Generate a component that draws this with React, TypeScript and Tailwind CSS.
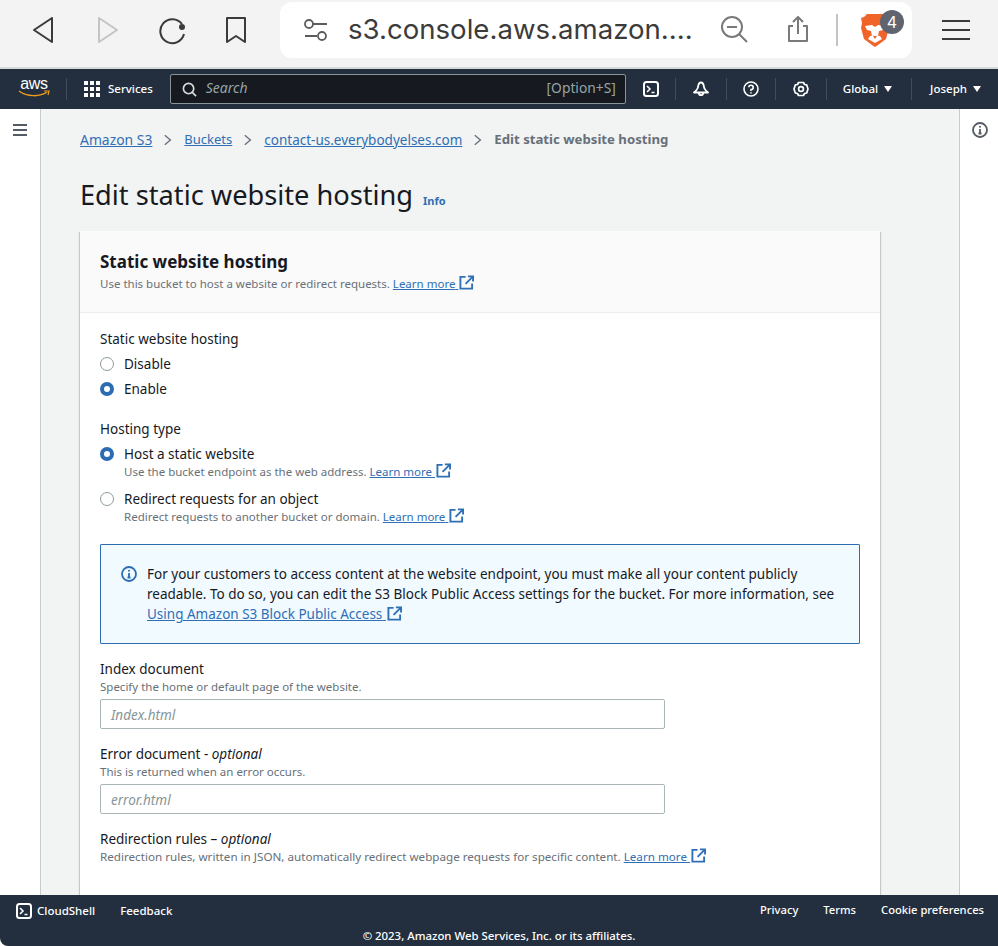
import React from "react";

const font = "font-['Noto_Sans',sans-serif]";

function ExternalIcon({ className = "" }: { className?: string }) {
    return (
        <svg viewBox="0 0 16 16" fill="none" stroke="#2f6fb5" strokeWidth="2" className={`inline-block w-[15px] h-[15px] ${className}`}>
            <path d="M7 2H1.500v12.500H14V9" />
            <path d="M9.500 1.500H15V7M15 1.500 7 9.500" />
        </svg>
    );
}

function LearnMore({ text = "Learn more" }: { text?: string }) {
    return (
        <span className="text-[#2f6fb5] whitespace-nowrap">
            <span className="underline">{text}&nbsp;</span>
            <ExternalIcon className="ml-[1px] align-[-2px]" />
        </span>
    );
}

function Radio({ checked, label }: { checked?: boolean; label: string }) {
    return (
        <div className="flex items-center h-5">
            {checked ? (
                <span className="w-[14px] h-[14px] rounded-full border-[4px] border-[#2b6cb3] bg-white" />
            ) : (
                <span className="w-[14px] h-[14px] rounded-full border border-[#8d9a9e] bg-white" />
            )}
            <span className="ml-[10px] text-[13.5px] text-[#16191f]">{label}</span>
        </div>
    );
}

function Desc({ children, className = "text-[11.5px]" }: { children: React.ReactNode; className?: string }) {
    return <p className={`leading-[18px] text-[#687078] whitespace-nowrap ${className}`}>{children}</p>;
}

function Divider() {
    return <span className="w-px h-[22px] bg-[#414d5c]" />;
}

function Chevron() {
    return (
        <svg viewBox="0 0 10 14" fill="none" stroke="#687078" strokeWidth="1.700" className="mx-3 w-2 h-3">
            <path d="M1 1l7 6-7 6" />
        </svg>
    );
}

function BrowserBar() {
    return (
        <div className="h-[67px] bg-[#f3f3f3] flex items-start shrink-0">
            <div className="flex items-center h-[60px] w-[280px]">
                <svg viewBox="0 0 24 30" fill="none" stroke="#3a3a3c" strokeWidth="2" strokeLinejoin="round" className="ml-[31px] w-6 h-[30px]">
                    <path d="M21 3 3 15l18 12z" />
                </svg>
                <svg viewBox="0 0 24 30" fill="none" stroke="#c4c4c4" strokeWidth="2" strokeLinejoin="round" className="ml-[40px] w-6 h-[30px]">
                    <path d="M4 3 22 15 4 27z" />
                </svg>
                <svg viewBox="0 0 30 30" fill="none" stroke="#3a3a3c" strokeWidth="2" className="ml-[39px] w-[30px] h-[30px]">
                    <path d="M24 9A12 12 0 1 0 26 19" />
                    <circle cx="24" cy="12" r="3" fill="#3a3a3c" stroke="none" />
                </svg>
                <svg viewBox="0 0 22 28" fill="none" stroke="#3a3a3c" strokeWidth="2" strokeLinejoin="round" className="ml-[37px] w-[22px] h-[28px]">
                    <path d="M2 2h18v24l-9-6-9 6z" />
                </svg>
            </div>
            <div className="mt-[2px] w-[632px] h-[56px] bg-white rounded-[12px] flex items-center">
                <svg viewBox="0 0 26 26" fill="none" stroke="#5c5c5c" strokeWidth="1.800" className="ml-[23px] w-[26px] h-[26px]">
                    <circle cx="6" cy="7" r="4" />
                    <path d="M10 7h14M2 19h12" />
                    <circle cx="19" cy="19" r="4" />
                </svg>
                <span className="ml-[19px] text-[27.6px] text-[#3b3b3b] font-['Inter',sans-serif] whitespace-nowrap w-[360px]">s3.console.aws.amazon....</span>
                <svg viewBox="0 0 30 30" fill="none" stroke="#7a7a7a" strokeWidth="2" className="ml-[11px] w-[30px] h-[30px]">
                    <circle cx="13" cy="12" r="10" />
                    <path d="M8 12h10M20 19l8 8" />
                </svg>
                <svg viewBox="0 0 24 30" fill="none" stroke="#7a7a7a" strokeWidth="2" strokeLinejoin="round" className="ml-[37px] w-6 h-[30px]">
                    <path d="M7 11H3v15h18V11h-4M12 19V2M7 7l5-5 5 5" />
                </svg>
                <span className="ml-[26px] w-[2px] h-[32px] bg-[#c4c4c4]" />
                <div className="relative ml-[22px] w-[30px] h-[36px]">
                    <svg viewBox="0 0 30 36" className="w-[30px] h-[36px]">
                        <path d="M7 2h16l3 3 3 1-1 5 1 5-3 11-8 6-3 2-3-2-8-6-3-11 1-5-1-5 3-1z" fill="#f0642a" />
                        <path d="M5 14l7-1 3 2 3-2 7 1-2 4-4 1-1 5-3-1-3 1-1-5-4-1z" fill="#fff" />
                        <path d="M10 24l5-1 5 1 2 3-7 4-7-4z" fill="#fff" />
                        <path d="M13 24h4l-2 3z" fill="#f0642a" />
                    </svg>
                    <span className="absolute left-[20px] top-[-2px] w-6 h-6 rounded-full bg-[#5f6470] text-white text-[16px] leading-6 text-center font-['Inter',sans-serif]">4</span>
                </div>
            </div>
            <div className="ml-[30px] mt-[20px] w-[28px] flex flex-col gap-[7px]">
                <span className="h-[2px] bg-[#3a3a3c]" />
                <span className="h-[2px] bg-[#3a3a3c]" />
                <span className="h-[2px] bg-[#3a3a3c]" />
            </div>
        </div>
    );
}

function AwsNav() {
    return (
        <div className="h-[42px] bg-[#232f3e] border-t-2 border-[#d5dbdb] flex items-center shrink-0 text-white text-[11.5px] font-medium">
            <div className="ml-[18px] w-[32px] h-[24px] flex flex-col items-center relative">
                <span className="text-[16px] leading-[14px] font-normal font-['Liberation_Sans',sans-serif] tracking-[-0.3px]">aws</span>
                <svg viewBox="0 0 32 8" fill="none" className="absolute left-0 top-[13px] w-8 h-2">
                    <path d="M1 1c8 6 21 6 28 1" stroke="#ec9a1c" strokeWidth="1.500" />
                    <path d="M26 1h5l-1 4" stroke="#ec9a1c" strokeWidth="1.200" />
                </svg>
            </div>
            <span className="ml-[16px] flex"><Divider /></span>
            <div className="ml-[17px] grid grid-cols-3 gap-[2px] w-[16px]">
                {Array.from({ length: 9 }).map((_, i) => (
                    <span key={i} className="w-[4px] h-[4px] bg-white" />
                ))}
            </div>
            <span className="ml-[8px]">Services</span>
            <div className="ml-[17px] w-[456px] h-[30px] bg-[#16191f] border border-[#879596] rounded-[2px] flex items-center">
                <svg viewBox="0 0 16 16" fill="none" stroke="#d5dbdb" strokeWidth="1.800" className="ml-[11px] w-[15px] h-[15px]">
                    <circle cx="7" cy="7" r="5.500" />
                    <path d="M11 11l4 4" />
                </svg>
                <span className="ml-[9px] italic text-[#95a5a6] text-[14px] font-normal leading-[20px] -translate-y-px">Search</span>
                <span className="ml-auto mr-[9px] text-[#95a5a6] text-[13.8px] font-normal leading-[20px] -translate-y-px">[Option+S]</span>
            </div>
            <svg viewBox="0 0 16 16" fill="none" stroke="#fff" strokeWidth="2" className="ml-[17px] w-4 h-4">
                <rect x="1" y="1" width="14" height="14" rx="2.500" />
                <path d="M4 5l3 3-3 3M8.500 11.500h3" strokeWidth="1.600" />
            </svg>
            <span className="ml-[16px] flex"><Divider /></span>
            <svg viewBox="0 0 16 16" fill="none" stroke="#fff" strokeWidth="1.800" strokeLinejoin="round" className="ml-[17px] w-4 h-4">
                <path d="M8 1.500C5.800 1.500 5.300 3.500 5 6 4.800 8 3 9.800 1 11.500h14C13 9.800 11.200 8 11 6 10.700 3.500 10.200 1.500 8 1.500z" />
                <path d="M5.800 12a2.200 2.200 0 0 0 4.400 0" />
            </svg>
            <span className="ml-[17px] flex"><Divider /></span>
            <svg viewBox="0 0 16 16" fill="none" stroke="#fff" strokeWidth="1.600" className="ml-[16px] w-4 h-4">
                <circle cx="8" cy="8" r="7" />
                <path d="M5.800 6.200A2.200 2.200 0 1 1 8 8.600v1.400M8 11.200v1.400" />
            </svg>
            <span className="ml-[16px] flex"><Divider /></span>
            <svg viewBox="0 0 16 16" fill="none" stroke="#fff" strokeWidth="1.700" strokeLinejoin="round" className="ml-[17px] w-4 h-4">
                <path d="M5.500 1.500h5l1 2 2.200.4L15 8l-1.300 4-2.200.5-1 2h-5l-1-2-2.200-.5L1 8l1.300-4.100 2.200-.4z" />
                <circle cx="8" cy="8" r="2.400" />
            </svg>
            <span className="ml-[17px] flex"><Divider /></span>
            <span className="ml-[16px]">Global</span>
            <span className="ml-[6px] w-0 h-0 border-l-[4px] border-r-[4px] border-t-[6px] border-l-transparent border-r-transparent border-t-white" />
            <span className="ml-[19px] flex"><Divider /></span>
            <span className="ml-[18px]">Joseph</span>
            <span className="ml-[6px] w-0 h-0 border-l-[4px] border-r-[4px] border-t-[6px] border-l-transparent border-r-transparent border-t-white" />
        </div>
    );
}

function Footer() {
    return (
        <div className="h-[51px] bg-[#232f3e] rounded-bl-[8px] shrink-0 text-white text-[11.2px] font-medium relative">
            <div className="flex items-center h-[31px]">
                <svg viewBox="0 0 16 16" fill="none" stroke="#fff" strokeWidth="2" className="ml-[16px] w-4 h-4">
                    <rect x="1" y="1" width="14" height="14" rx="2.500" />
                    <path d="M4 5l3 3-3 3M8.500 11.500h3" strokeWidth="1.600" />
                </svg>
                <span className="ml-[5px] text-[11.5px]">CloudShell</span>
                <span className="ml-[25px] text-[11.5px]">Feedback</span>
                <span className="ml-auto">Privacy</span>
                <span className="ml-[25px]">Terms</span>
                <span className="ml-[25px] mr-[14px]">Cookie preferences</span>
            </div>
            <p className="text-center text-[11.4px] leading-[20px]">© 2023, Amazon Web Services, Inc. or its affiliates.</p>
        </div>
    );
}

function Card() {
    return (
        <div className="mt-[18px] w-[800px] bg-white shadow-[0_1px_1px_0_rgba(0,28,36,0.3),1px_1px_1px_0_rgba(0,28,36,0.15),-1px_1px_1px_0_rgba(0,28,36,0.15)] grow">
            <div className="h-[82px] bg-[#fafafa] border-b border-[#eaeded] px-5 pt-[18px]">
                <h2 className="text-[17px] leading-[26px] font-bold text-[#16191f]">Static website hosting</h2>
                <Desc>
                    Use this bucket to host a website or redirect requests. <LearnMore />
                </Desc>
            </div>
            <div className="px-5 pt-4 text-[13.5px] leading-5 text-[#16191f]">
                <p>Static website hosting</p>
                <div className="mt-[5px] flex flex-col gap-[5px]">
                    <Radio label="Disable" />
                    <Radio checked label="Enable" />
                </div>

                <p className="mt-5">Hosting type</p>
                <div className="mt-[5px]">
                    <Radio checked label="Host a static website" />
                    <Desc className="text-[11.5px] ml-6 -mt-px">
                        Use the bucket endpoint as the web address. <LearnMore />
                    </Desc>
                </div>
                <div className="mt-2">
                    <Radio label="Redirect requests for an object" />
                    <Desc className="text-[11.5px] ml-6 -mt-px">
                        Redirect requests to another bucket or domain. <LearnMore />
                    </Desc>
                </div>

                <div className="mt-[18px] h-[100px] bg-[#f1faff] border border-[#2b6cb3] rounded-[1px] flex pl-[20px] pt-[19px]">
                    <svg viewBox="0 0 16 16" fill="none" stroke="#2b6cb3" strokeWidth="1.800" className="mt-[2px] w-4 h-4 shrink-0">
                        <circle cx="8" cy="8" r="7" />
                        <path d="M8 7v4.500M6.500 11.500h3" />
                        <circle cx="8" cy="4.700" r="1" fill="#2b6cb3" stroke="none" />
                    </svg>
                    <div className="ml-[10px] w-[700px]">
                        <p>For your customers to access content at the website endpoint, you must make all your content publicly readable. To do so, you can edit the S3 Block Public Access settings for the bucket. For more information, see</p>
                        <LearnMore text="Using Amazon S3 Block Public Access" />
                    </div>
                </div>

                <p className="mt-[15px]">Index document</p>
                <Desc className="text-[11.5px] -mt-px">Specify the home or default page of the website.</Desc>
                <div className="mt-[3px] w-[565px] h-[30px] border border-[#aab7b8] rounded-[2px] px-[10px] leading-[31px] italic text-[#879596]">Index.html</div>

                <p className="mt-[15px]">Error document - <em>optional</em></p>
                <Desc className="text-[11.5px] -mt-px">This is returned when an error occurs.</Desc>
                <div className="mt-[3px] w-[565px] h-[30px] border border-[#aab7b8] rounded-[2px] px-[10px] leading-[31px] italic text-[#879596]">error.html</div>

                <p className="mt-[15px]">Redirection rules – <em>optional</em></p>
                <Desc className="text-[11.65px] -mt-px">
                    Redirection rules, written in JSON, automatically redirect webpage requests for specific content. <LearnMore />
                </Desc>
            </div>
        </div>
    );
}

export default function App() {
    return (
        <div className={`h-[946px] w-[998px] flex flex-col overflow-hidden bg-white ${font}`}>
            <BrowserBar />
            <AwsNav />
            <div className="flex grow min-h-0">
                <div className="w-[41px] bg-white border-r border-[#c6cccc] shrink-0 pl-[13px] pt-[15px]">
                    <div className="w-[14px] flex flex-col gap-[3px]">
                        <span className="h-[2px] bg-[#545b64]" />
                        <span className="h-[2px] bg-[#545b64]" />
                        <span className="h-[2px] bg-[#545b64]" />
                    </div>
                </div>
                <main className="w-[918px] bg-[#f2f3f3] flex flex-col pl-[39px] overflow-hidden">
                    <nav className="mt-5 flex items-center h-[22px] text-[13.5px] whitespace-nowrap">
                        <span className="text-[#2f6fb5] underline text-[13.9px]">Amazon S3</span>
                        <Chevron />
                        <span className="text-[#2f6fb5] underline text-[13px]">Buckets</span>
                        <Chevron />
                        <span className="text-[#2f6fb5] underline">contact-us.everybodyelses.com</span>
                        <Chevron />
                        <span className="text-[#687078] font-bold text-[13.2px]">Edit static website hosting</span>
                    </nav>
                    <div className="mt-[26px] flex items-baseline h-[36px]">
                        <h1 className="text-[27.2px] leading-[36px] text-[#16191f]">Edit static website hosting</h1>
                        <span className="ml-[10px] text-[11px] font-bold text-[#2f6fb5]">Info</span>
                    </div>
                    <Card />
                </main>
                <div className="w-[39px] bg-white border-l border-[#c6cccc] shrink-0 pl-[12px] pt-[13px]">
                    <svg viewBox="0 0 16 16" fill="none" stroke="#545b64" strokeWidth="1.800" className="w-4 h-4">
                        <circle cx="8" cy="8" r="7" />
                        <path d="M8 7v4.500M6.500 11.500h3" />
                        <circle cx="8" cy="4.700" r="1" fill="#545b64" stroke="none" />
                    </svg>
                </div>
            </div>
            <Footer />
        </div>
    );
}
